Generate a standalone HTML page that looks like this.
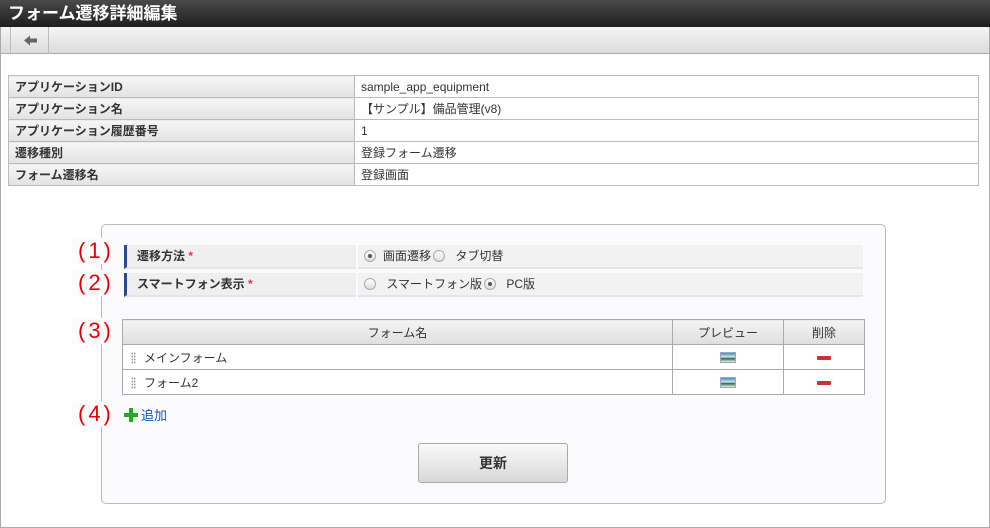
<!DOCTYPE html>
<html><head><meta charset="utf-8"><style>
*{box-sizing:border-box;margin:0;padding:0}
body{width:990px;height:528px;overflow:hidden;background:#fff;font-family:"Liberation Sans","Noto Sans CJK JP",sans-serif;font-size:12px;color:#333;position:relative}
.title{position:absolute;left:0;top:0;width:990px;height:27px;background:linear-gradient(#4a4a4a,#1e1e1e);color:#fff;font-weight:bold;font-size:17px;line-height:27px;padding-left:8px}
.tool{position:absolute;left:0;top:27px;width:990px;height:27px;background:linear-gradient(#f4f4f4,#dcdcdc);border-bottom:1px solid #aaa;border-left:1px solid #aaa;border-right:1px solid #aaa}
.back{position:absolute;left:9px;top:0;width:39px;height:27px;border-left:1px solid #bbb;border-right:1px solid #bbb}
.frame{position:absolute;left:0;top:54px;width:990px;height:474px;border-left:1px solid #aaa;border-right:1px solid #aaa;border-bottom:1px solid #aaa}
table{border-collapse:collapse}
.info{position:absolute;left:8px;top:75px;width:971px}
.info td{border:1px solid #bbb;height:22px;padding:0 6px;font-size:12px}
.info td.l{width:346px;background:linear-gradient(#f6f6f6,#e2e2e2);font-weight:bold;color:#333}
.panel{position:absolute;left:101px;top:224px;width:785px;height:280px;border:1px solid #bbb;border-radius:5px;background:#fbfbfd}
.ann{position:absolute;left:72px;color:#e00;font-size:22px;background:#fbfbfd;padding:0 6px;line-height:26px;letter-spacing:3px}
.row{position:absolute;left:124px;width:739px;height:24px}
.row .lb{position:absolute;left:0;top:0;width:232px;background:#efefef;border-left:3px solid #2c4a8a;font-weight:bold;line-height:22px;padding-left:10px;border-bottom:2px solid #e4e4e4;height:24px}
.row .vl{position:absolute;left:234px;top:0;right:0;height:24px;background:#f2f2f2;border-bottom:2px solid #e4e4e4;line-height:22px;padding-left:6px}
.req{color:#e33}
.rad{display:inline-block;width:12px;height:12px;border:1px solid #aaa;border-radius:50%;background:linear-gradient(#fff,#ddd);vertical-align:-2px;margin-right:7px;position:relative}
.rad.on:after{content:"";position:absolute;left:3px;top:3px;width:4px;height:4px;border-radius:50%;background:#555}
.ft{position:absolute;left:122px;top:319px;width:743px}
.ft td,.ft th{border:1px solid #aaa;height:25px}
.ft th{background:linear-gradient(#f4f4f4,#dedede);font-weight:normal;font-size:12px}
.ft td{background:#fff;padding-left:8px}
.grip{display:inline-block;width:5px;height:12px;background:radial-gradient(circle,#999 0.8px,transparent 1px) 0 0/2.5px 3px;vertical-align:-2px;margin-right:8px}
.img{display:inline-block;width:16px;height:11px;border:1px solid #9ab;background:linear-gradient(#4a8cc0 0,#d0e4f4 45%,#2e6a40 60%,#e8f0f4 100%);vertical-align:middle}
.del{display:inline-block;width:14px;height:4px;background:#c33;border-radius:1px;vertical-align:middle}
.btn{position:absolute;left:418px;top:443px;width:150px;height:40px;border:1px solid #aaa;border-radius:3px;background:linear-gradient(#fafafa,#d8d8d8);text-align:center;line-height:38px;font-weight:bold;font-size:14px}
</style></head><body>
<div class="title">フォーム遷移詳細編集</div>
<div class="tool"><div class="back"><svg width="39" height="27"><path d="M13 13.5 L19 8.5 V11.5 H26 V15.5 H19 V18.5 Z" fill="#666"/></svg></div></div>
<div class="frame"></div>
<table class="info">
<tr><td class="l">アプリケーションID</td><td>sample_app_equipment</td></tr>
<tr><td class="l">アプリケーション名</td><td>【サンプル】備品管理(v8)</td></tr>
<tr><td class="l">アプリケーション履歴番号</td><td>1</td></tr>
<tr><td class="l">遷移種別</td><td>登録フォーム遷移</td></tr>
<tr><td class="l">フォーム遷移名</td><td>登録画面</td></tr>
</table>
<div class="panel"></div>
<div class="ann" style="top:238px">(1)</div>
<div class="ann" style="top:270px">(2)</div>
<div class="ann" style="top:318px">(3)</div>
<div class="ann" style="top:401px">(4)</div>
<div class="row" style="top:245px"><div class="lb">遷移方法 <span class="req">*</span></div><div class="vl"><span class="rad on"></span>画面遷移<span class="rad" style="margin-left:2px"></span> タブ切替</div></div>
<div class="row" style="top:273px"><div class="lb">スマートフォン表示 <span class="req">*</span></div><div class="vl"><span class="rad"></span> スマートフォン版<span class="rad on" style="margin-left:2px"></span> PC版</div></div>
<table class="ft">
<tr><th style="width:550px">フォーム名</th><th style="width:111px">プレビュー</th><th>削除</th></tr>
<tr><td><span class="grip"></span>メインフォーム</td><td style="text-align:center;padding:0"><span class="img"></span></td><td style="text-align:center;padding:0"><span class="del"></span></td></tr>
<tr><td><span class="grip"></span>フォーム2</td><td style="text-align:center;padding:0"><span class="img"></span></td><td style="text-align:center;padding:0"><span class="del"></span></td></tr>
</table>
<div style="position:absolute;left:124px;top:405px;color:#1a55b5;font-size:13px"><svg width="14" height="14" style="vertical-align:-2px;margin-right:3px"><path d="M5 0h4v5h5v4H9v5H5V9H0V5h5z" fill="#2a2"/></svg>追加</div>
<div class="btn">更新</div>
</body></html>
